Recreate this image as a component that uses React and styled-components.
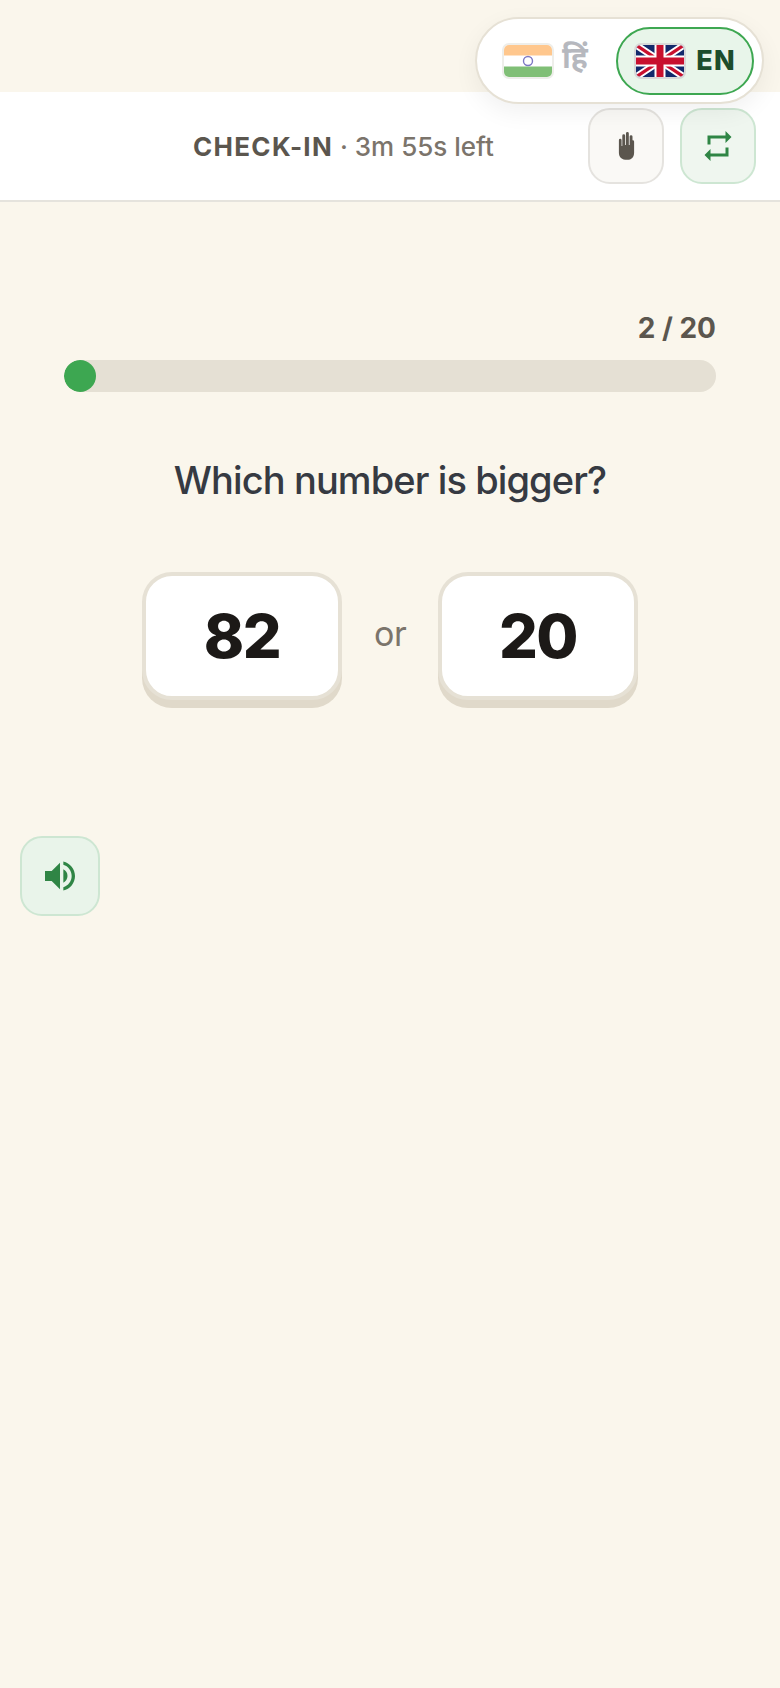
import React from 'react'
import styled, { createGlobalStyle } from 'styled-components'
import { MdRepeat, MdVolumeUp } from 'react-icons/md'

const GlobalStyle = createGlobalStyle`
  html, body {
    margin: 0;
    padding: 0;
    background-color: #faf6ec;
    font-family: Inter, "Noto Sans", "Liberation Sans", sans-serif;
  }
  * {
    box-sizing: border-box;
  }
`

const Page = styled.div`
  position: relative;
  width: 780px;
  min-height: 1688px;
  padding-top: 92px;
  background-color: #faf6ec;
`

const LanguagePill = styled.div`
  position: absolute;
  top: 17px;
  left: 475px;
  z-index: 2;
  width: 289px;
  height: 87px;
  display: flex;
  align-items: center;
  padding: 0 8px 0 25px;
  background-color: #fff;
  border: 2px solid #e6e1d5;
  border-radius: 44px;
  box-shadow: 0 8px 24px rgba(0, 0, 0, 0.06);
`

const HindiOption = styled.div`
  display: flex;
  align-items: center;
  gap: 8px;
  flex: 1;
  color: #b6b8be;
  font-family: "Noto Sans Devanagari", "Noto Sans", sans-serif;
  font-size: 30px;
  font-weight: 700;
`

const EnglishOption = styled.div`
  width: 138px;
  height: 68px;
  display: flex;
  align-items: center;
  justify-content: center;
  gap: 10px;
  background-color: #e8f5ea;
  border: 2.5px solid #3da751;
  border-radius: 34px;
  color: #1c4d2c;
  font-size: 27px;
  font-weight: 800;
  letter-spacing: 1.2px;
`

const FlagFrame = styled.span`
  display: block;
  width: 52px;
  height: 36px;
  border: 2px solid ${({ $edge }) => $edge};
  border-radius: 7px;
  overflow: hidden;
  line-height: 0;
`

const Header = styled.header`
  height: 110px;
  display: flex;
  align-items: center;
  gap: 16px;
  padding: 0 24px 0 193px;
  background-color: #fff;
  border-bottom: 2px solid #e5e3dd;
`

const Title = styled.div`
  flex: 1;
  font-size: 26px;
  font-weight: 500;
  color: #7b746b;
`

const TitleLabel = styled.span`
  font-weight: 700;
  letter-spacing: 1.3px;
  color: #5b564e;
`

const IconButton = styled.button`
  width: 76px;
  height: 76px;
  display: flex;
  align-items: center;
  justify-content: center;
  padding: 0;
  background-color: ${({ $green }) => ($green ? '#eff6ef' : '#faf9f6')};
  border: 2px solid ${({ $green }) => ($green ? '#cde6d2' : '#e5e3df')};
  border-radius: 22px;
  color: ${({ $green }) => ($green ? '#2f8545' : '#5b564e')};
`

const Main = styled.main`
  padding: 109px 64px 0;
`

const ProgressLabel = styled.div`
  text-align: right;
  font-size: 28px;
  line-height: 34px;
  font-weight: 700;
  color: #5b564e;
`

const ProgressTrack = styled.div`
  height: 32px;
  margin-top: 15px;
  background-color: #e5e0d4;
  border-radius: 16px;
  overflow: hidden;
`

const ProgressFill = styled.div`
  height: 100%;
  background-color: #3da751;
  border-radius: 16px;
`

const Question = styled.h1`
  margin: 65px 0 0;
  text-align: center;
  font-size: 38px;
  line-height: 46px;
  font-weight: 500;
  letter-spacing: -0.9px;
  color: #363a42;
`

const Choices = styled.div`
  display: flex;
  justify-content: center;
  align-items: flex-start;
  gap: 32px;
  margin-top: 69px;
`

const NumberCard = styled.button`
  width: 200px;
  height: 128px;
  padding: 0;
  background-color: #fff;
  border: 4px solid #e6e1d5;
  border-radius: 30px;
  box-shadow: 0 8px 0 #e0d9ca;
  font-family: inherit;
  font-size: 61px;
  font-weight: 800;
  letter-spacing: -1.5px;
  color: #1c1917;
`

const OrLabel = styled.span`
  width: 32px;
  margin-top: 41px;
  text-align: center;
  font-size: 34px;
  line-height: 42px;
  letter-spacing: -0.4px;
  color: #7b746b;
`

const SoundButton = styled.button`
  width: 80px;
  height: 80px;
  display: flex;
  align-items: center;
  justify-content: center;
  margin: 136px 0 0 20px;
  padding: 0;
  background-color: #e9f4ea;
  border: 2px solid #cde6d2;
  border-radius: 22px;
  color: #2f8545;
`

function IndiaFlag() {
  return (
    <FlagFrame $edge="#eeeeea">
      <svg width="48" height="32" viewBox="0 0 48 32">
        <rect width="48" height="32" fill="#fff" />
        <rect width="48" height="10.5" fill="#ffc78d" />
        <rect y="21.5" width="48" height="10.500" fill="#80bf76" />
        <circle cx="24" cy="16" r="4.500" fill="none" stroke="#7d78c4" strokeWidth="1.4" />
      </svg>
    </FlagFrame>
  )
}

function UkFlag() {
  return (
    <FlagFrame $edge="#d8d9d8">
      <svg width="48" height="32" viewBox="0 0 48 32">
        <rect width="48" height="32" fill="#12296b" />
        <path d="M0 0L48 32M48 0L0 32" stroke="#fff" strokeWidth="7" />
        <path d="M0 0L48 32M48 0L0 32" stroke="#c8102e" strokeWidth="3.200" />
        <path d="M24 0V32M0 16H48" stroke="#fff" strokeWidth="11" />
        <path d="M24 0V32M0 16H48" stroke="#c8102e" strokeWidth="7" />
      </svg>
    </FlagFrame>
  )
}

function HandIcon() {
  return (
    <svg width="17" height="30" viewBox="0 0 19 32" fill="currentColor">
      <path d="M1 9.500a1.500 1.500 0 0 1 3 0V16h.8V4.500a1.600 1.600 0 0 1 3.200 0V15h.9V2a1.600 1.600 0 0 1 3.200 0v13h.9V5.500a1.600 1.600 0 0 1 3.200 0V9.500h.3a1.500 1.500 0 0 1 1.500 1.500v12.500c0 4.800-3 8-7.700 8C4.200 31.500 1 28.300 1 23.500z" />
    </svg>
  )
}

function App() {
  return (
    <Page>
      <GlobalStyle />
      <LanguagePill>
        <HindiOption>
          <IndiaFlag />
          हिं
        </HindiOption>
        <EnglishOption>
          <UkFlag />
          EN
        </EnglishOption>
      </LanguagePill>
      <Header>
        <Title>
          <TitleLabel>CHECK-IN</TitleLabel> · 3m 55s left
        </Title>
        <IconButton>
          <HandIcon />
        </IconButton>
        <IconButton $green>
          <MdRepeat size={36} />
        </IconButton>
      </Header>
      <Main>
        <ProgressLabel>2 / 20</ProgressLabel>
        <ProgressTrack>
          <ProgressFill style={{ width: `${(2 / 20) * 100 * 0.49}%` }} />
        </ProgressTrack>
        <Question>Which number is bigger?</Question>
        <Choices>
          <NumberCard>82</NumberCard>
          <OrLabel>or</OrLabel>
          <NumberCard>20</NumberCard>
        </Choices>
      </Main>
      <SoundButton>
        <MdVolumeUp size={40} />
      </SoundButton>
    </Page>
  )
}

export default App
